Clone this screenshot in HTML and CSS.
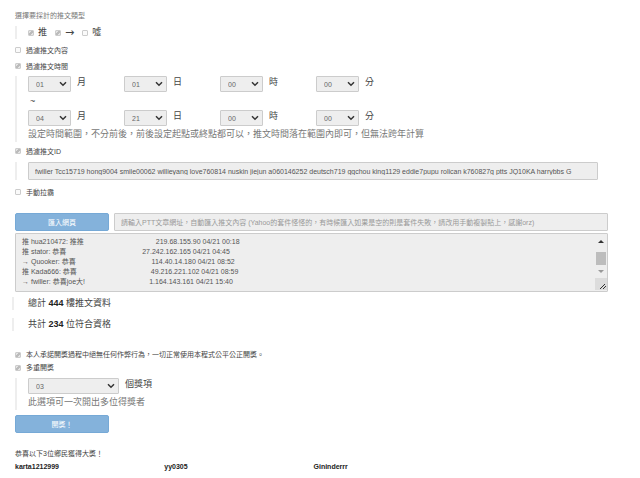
FILE: index.html
```html
<!DOCTYPE html>
<html lang="zh-Hant">
<head>
<meta charset="utf-8">
<title>推文抽獎</title>
<link rel="stylesheet" href="styles.css">
</head>
<body>
<svg class="defs" aria-hidden="true"><symbol id="chevron" viewBox="0 0 8 6"><path d="M1 1.3 4 4.2 7 1.3" fill="none" stroke="#333" stroke-width="1.5"/></symbol></svg>
<form class="page">
  <p class="heading">選擇要採計的推文類型</p>
  <div class="block types">
    <label class="type"><input type="checkbox" checked disabled>推</label>
    <label class="type arrow"><input type="checkbox" checked disabled>→</label>
    <label class="type"><input type="checkbox" disabled>噓</label>
  </div>
  <label class="option"><input type="checkbox" disabled>過濾推文內容</label>
  <label class="option"><input type="checkbox" checked disabled>過濾推文時間</label>
  <div class="block period">
    <div class="times">
      <label class="field"><span class="pick"><select disabled><option>01</option></select><svg><use href="#chevron"/></svg></span>月</label>
      <label class="field"><span class="pick"><select disabled><option>01</option></select><svg><use href="#chevron"/></svg></span>日</label>
      <label class="field"><span class="pick"><select disabled><option>00</option></select><svg><use href="#chevron"/></svg></span>時</label>
      <label class="field"><span class="pick"><select disabled><option>00</option></select><svg><use href="#chevron"/></svg></span>分</label>
    </div>
    <p class="tilde">~</p>
    <div class="times">
      <label class="field"><span class="pick"><select disabled><option>04</option></select><svg><use href="#chevron"/></svg></span>月</label>
      <label class="field"><span class="pick"><select disabled><option>21</option></select><svg><use href="#chevron"/></svg></span>日</label>
      <label class="field"><span class="pick"><select disabled><option>00</option></select><svg><use href="#chevron"/></svg></span>時</label>
      <label class="field"><span class="pick"><select disabled><option>00</option></select><svg><use href="#chevron"/></svg></span>分</label>
    </div>
    <p class="hint">設定時間範圍，不分前後，前後設定起點或終點都可以，推文時間落在範圍內即可，但無法跨年計算</p>
  </div>
  <label class="option"><input type="checkbox" checked disabled>過濾推文ID</label>
  <div class="block ids">
    <input class="text" type="text" aria-label="過濾推文ID" disabled value="fwiller Tcc15719 hong9004 smile00062 willieyang love760814 nuskin jiejun a060146252 deutsch719 ggchou king1129 eddie7pupu rolican k760827g ptts JQ10KA harrybbs G">
  </div>
  <label class="option"><input type="checkbox" disabled>手動拉霸</label>
  <div class="import">
    <button class="button" type="button" disabled>匯入網頁</button>
    <input class="text" type="text" aria-label="文章網址" disabled placeholder="請輸入PTT文章網址，自動匯入推文內容 (Yahoo的套件怪怪的，有時候匯入如果是空的則是套件失敗，請改用手動複製貼上，感謝orz)">
  </div>
  <div class="pushes">
    <textarea aria-label="推文內容" disabled>推 hua210472: 推推                                     219.68.155.90 04/21 00:18
推 stator: 恭喜                                       27.242.162.165 04/21 04:45
→ Quooker: 恭喜                                       114.40.14.180 04/21 08:52
推 Kada666: 恭喜                                      49.216.221.102 04/21 08:59
→ fwiller: 恭喜joe大!                                 1.164.143.161 04/21 15:40</textarea>
    <svg class="scroll" viewBox="0 0 14 58" aria-hidden="true">
      <path d="M4 10 7 7 10 10Z" fill="#333"/>
      <path d="M2 19H12V32H2Z" fill="#bdbdbd"/>
      <path d="M4 37 7 40 10 37Z" fill="#999"/>
      <path d="M1 45H13V57H1Z" fill="#dcdcdc"/>
      <path d="M6 56 11 51M9 56 12 53" stroke="#333" fill="none"/>
    </svg>
  </div>
  <p class="total">總計 <b>444</b> 樓推文資料</p>
  <p class="total">共計 <b>234</b> 位符合資格</p>
  <div class="draw">
    <label class="option tight"><input type="checkbox" checked disabled>本人承諾開獎過程中絕無任何作弊行為，一切正常使用本程式公平公正開獎。</label>
    <label class="option tight"><input type="checkbox" checked disabled>多重開獎</label>
    <div class="block prizes">
      <label class="field"><span class="pick wide"><select disabled><option>03</option></select><svg><use href="#chevron"/></svg></span>個獎項</label>
      <p class="hint">此選項可一次開出多位得獎者</p>
    </div>
    <button class="button" type="button" disabled>開獎！</button>
  </div>
  <p class="result">恭喜以下3位鄉民獲得大獎！</p>
  <div class="winners"><b>karta1212999</b><b>yy0305</b><b>Gininderrr</b></div>
</form>
</body>
</html>
```

FILE: styles.css
```css
* { box-sizing: border-box; }
body {
  margin: 0;
  background: #fff;
  color: #444;
  font: 7px/13px "Liberation Sans", "Noto Sans CJK TC", sans-serif;
}
p { margin: 0; }
input, select, textarea, button { font: inherit; margin: 0; }
.defs { position: absolute; width: 0; height: 0; }
.page { padding: 9px 32px 0 15px; }
.heading { color: #777; }

.block {
  border-left: 2px solid #eee;
  padding-left: 11px;
  margin-right: 10px;
}
.types {
  display: flex;
  gap: 8px;
  margin: 4px 0 3px;
  font-size: 9px;
}
.type { display: flex; align-items: center; gap: 4px; }
.arrow { font-family: "DejaVu Sans", sans-serif; font-size: 11px; }

input[type="checkbox"] {
  appearance: none;
  flex: none;
  width: 6px;
  height: 6px;
  border: 1px solid #ccc;
  border-radius: 1px;
  background: #fafafa;
}
input[type="checkbox"]:checked {
  background: linear-gradient(135deg, #e4e4e4 35%, #bbb 35%, #bbb 65%, #e4e4e4 65%);
}
.option {
  display: flex;
  align-items: center;
  gap: 5px;
  height: 16px;
}
.tight { height: 13px; }

.period { margin-top: 2px; margin-bottom: 1px; }
.times { display: grid; grid-template-columns: repeat(4, 96px); }
.field { display: flex; gap: 6px; height: 16px; font-size: 9px; }
.pick { position: relative; width: 43px; height: 16px; }
.wide { width: 91px; }
.pick select {
  appearance: none;
  display: block;
  width: 100%;
  height: 16px;
  padding: 0 7px;
  border: 1px solid #ccc;
  border-radius: 1px;
  background: #eee;
  color: #666;
  font-size: 7px;
  opacity: 1;
}
.pick svg { position: absolute; right: 4px; top: 5px; width: 8px; height: 6px; }
.tilde { height: 18px; line-height: 18px; padding-left: 2px; font-size: 9px; }
.hint { height: 16px; line-height: 16px; font-size: 9px; color: #777; }

.ids { margin-top: 3px; margin-bottom: 4px; }
.text {
  display: block;
  width: 100%;
  height: 18px;
  padding: 0 6px;
  border: 1px solid #ccc;
  border-radius: 1px;
  background: #eee;
  color: #555;
  line-height: 16px;
}
.text::placeholder { color: #999; }
.import { display: flex; gap: 5px; margin-top: 13px; }
.import .text { flex: 1; min-width: 0; }
.button {
  display: block;
  flex: none;
  width: 94px;
  height: 18px;
  padding: 0;
  border: 1px solid #76a9d6;
  border-radius: 2px;
  background: #84b2db;
  color: #fff;
}
.pushes { position: relative; margin-top: 2px; height: 59px; }
.pushes textarea {
  display: block;
  width: 100%;
  height: 100%;
  padding: 3px 6px;
  border: 1px solid #ccc;
  border-radius: 1px;
  background: #eee;
  color: #555;
  line-height: 10px;
  resize: none;
  overflow: hidden;
  white-space: pre;
}
.scroll { position: absolute; right: 0; top: 0; width: 14px; height: 58px; }

.total {
  margin: 5px 0 8px -3px;
  padding-left: 14px;
  border-left: 2px solid #eee;
  font-size: 9px;
}
.total b { color: #222; }
.draw { margin-top: 17px; }
.prizes { margin: 4px 0 5px; }
.result { margin-top: 14px; }
.winners { display: grid; grid-template-columns: repeat(4, 1fr); margin-right: -4px; color: #222; }
```
